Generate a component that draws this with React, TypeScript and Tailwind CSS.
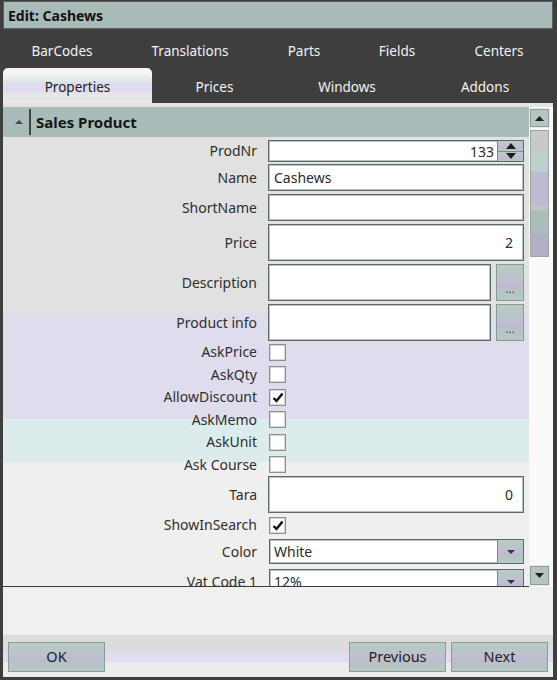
import React from "react";

const btnBg =
  "bg-[linear-gradient(to_bottom,#bccac8_0%,#b7c7c5_25%,#c2bfd2_45%,#bdbacf_62%,#b5c5c3_75%,#b9c7c5_100%)]";

function TriUp({ c = "#1e1e1e", w = 9, h = 5 }: { c?: string; w?: number; h?: number }) {
  return (
    <svg width={w} height={h} viewBox={`0 0 ${w} ${h}`}>
      <polygon points={`0,${h} ${w / 2},0 ${w},${h}`} fill={c} />
    </svg>
  );
}
function TriDown({ c = "#1e1e1e", w = 9, h = 5 }: { c?: string; w?: number; h?: number }) {
  return (
    <svg width={w} height={h} viewBox={`0 0 ${w} ${h}`}>
      <polygon points={`0,0 ${w},0 ${w / 2},${h}`} fill={c} />
    </svg>
  );
}

function Label({ text }: { text: string }) {
  return (
    <div className="w-[254px] shrink-0 text-right text-[14px] text-[#2e2e2e] leading-none whitespace-nowrap">
      {text}
    </div>
  );
}

function Check({ checked }: { checked?: boolean }) {
  return (
    <div className="w-[17px] h-[17px] bg-white border border-[#8f8f8f] shadow-[inset_0_0_0_1px_#d8d8d8] flex items-center justify-center">
      {checked && (
        <svg width="12" height="11" viewBox="0 0 12 11">
          <path d="M1.5 6 L4.5 9 L10.5 1.5" stroke="#111" strokeWidth="2.4" fill="none" />
        </svg>
      )}
    </div>
  );
}

function Box({ children, cls }: { children?: React.ReactNode; cls: string }) {
  return (
    <div
      className={
        "bg-white border border-[#5e6a69] shadow-[inset_0_0_0_1px_#b9c2c1] flex items-center text-[14px] text-[#2b2b2b] " +
        cls
      }
    >
      {children}
    </div>
  );
}

function DotsBtn() {
  return (
    <div
      className={
        "w-[28px] h-full border border-[#8d9997] flex items-end justify-center pb-[6px] text-[11px] leading-none text-[#333] " +
        btnBg
      }
    >
      ...
    </div>
  );
}

function Combo({ text }: { text: string }) {
  return (
    <Box cls="w-[255px] h-full pl-[4px] pr-0 justify-between">
      <span>{text}</span>
      <div className={"w-[26px] h-full border-l border-[#7d8988] flex items-center justify-center " + btnBg}>
        <TriDown c="#333" w={8} h={4} />
      </div>
    </Box>
  );
}

export default function App() {
  return (
    <div className="w-[557px] h-[680px] bg-[#3e3e3e] pt-[1px] pl-[3px] pr-[4px] pb-[3px] flex flex-col font-['Noto_Sans',sans-serif] overflow-hidden">
      {/* Title */}
      <div className="h-[28px] bg-[#a9bbb8] border border-[#5a5f5e] flex items-center pl-[4px] text-[14px] font-bold text-[#111] shrink-0">
        Edit: Cashews
      </div>
      <div className="h-[3px] shrink-0" />
      {/* Tabs row 1 */}
      <div className="h-[36px] pt-[2px] flex shrink-0 text-[13.5px] text-[#f2f2f2]">
        <div className="w-[118px] flex items-center justify-center">BarCodes</div>
        <div className="w-[138px] flex items-center justify-center">Translations</div>
        <div className="w-[90px] flex items-center justify-center">Parts</div>
        <div className="w-[96px] flex items-center justify-center">Fields</div>
        <div className="w-[108px] flex items-center justify-center">Centers</div>
      </div>
      {/* Tabs row 2 */}
      <div className="h-[35px] flex shrink-0 text-[13.5px] text-[#f2f2f2]">
        <div className="w-[149px] pt-[3px] flex items-center justify-center rounded-t-[5px] text-[#222] bg-[linear-gradient(to_bottom,#f6f6f6_0%,#f3f3f3_22%,#e2eded_26%,#e0ebeb_36%,#dedcee_42%,#dedcee_68%,#e6e6e6_74%,#e8e8e8_100%)]">
          Properties
        </div>
        <div className="w-[125px] pt-[3px] flex items-center justify-center">Prices</div>
        <div className="w-[140px] pt-[3px] flex items-center justify-center">Windows</div>
        <div className="w-[136px] pt-[3px] flex items-center justify-center">Addons</div>
      </div>
      {/* Content */}
      <div className="flex-1 bg-[#f0f0f0] flex flex-col">
        <div className="h-[4px] bg-[#e4e4e4] shrink-0" />
        <div className="h-[480px] flex shrink-0">
          {/* left column */}
          <div className="w-[526px] flex flex-col border-b border-[#3a3a3a] overflow-hidden">
            <div className="h-[30px] bg-[#a9bcba] flex items-center shrink-0">
              <div className="w-[26px] h-full flex items-center justify-center pl-[6px]">
                <TriUp c="#4a4a4a" w={8} h={4} />
              </div>
              <div className="w-[2px] h-[26px] bg-[#3c4442]" />
              <div className="pl-[5px] text-[15px] font-bold text-[#161616]">Sales Product</div>
            </div>
            <div className="flex-1 overflow-hidden pt-[3px] bg-[linear-gradient(to_bottom,#e1e1e1_0px,#e1e1e1_176px,#dfdcee_176px,#dfdcee_282px,#dcecec_282px,#dcecec_325px,#efefef_325px)]">
              {/* ProdNr */}
              <div className="h-[22px] flex items-center">
                <Label text="ProdNr" />
                <div className="ml-[11px] h-full">
                  <Box cls="w-[256px] h-full justify-end">
                    <span className="pr-[3px]">133</span>
                    <div className="w-[26px] h-full flex flex-col border-l border-[#7d8988]">
                      <div className={"flex-1 flex items-center justify-center border-b border-[#7d8988] " + btnBg}>
                        <TriUp w={10} h={6} />
                      </div>
                      <div className={"flex-1 flex items-center justify-center " + btnBg}>
                        <TriDown w={10} h={6} />
                      </div>
                    </div>
                  </Box>
                </div>
              </div>
              {/* Name */}
              <div className="h-[27px] mt-[2px] flex items-center">
                <Label text="Name" />
                <div className="ml-[11px] h-full">
                  <Box cls="w-[256px] h-full pl-[5px]">Cashews</Box>
                </div>
              </div>
              {/* ShortName */}
              <div className="h-[27px] mt-[3px] flex items-center">
                <Label text="ShortName" />
                <div className="ml-[11px] h-full">
                  <Box cls="w-[256px] h-full" />
                </div>
              </div>
              {/* Price */}
              <div className="h-[37px] mt-[3px] flex items-center">
                <Label text="Price" />
                <div className="ml-[11px] h-full">
                  <Box cls="w-[256px] h-full justify-end pr-[10px]">2</Box>
                </div>
              </div>
              {/* Description */}
              <div className="h-[37px] mt-[3px] flex items-center">
                <Label text="Description" />
                <div className="ml-[11px] h-full flex gap-[5px]">
                  <Box cls="w-[223px] h-full" />
                  <DotsBtn />
                </div>
              </div>
              {/* Product info */}
              <div className="h-[37px] mt-[3px] flex items-center">
                <Label text="Product info" />
                <div className="ml-[11px] h-full flex gap-[5px]">
                  <Box cls="w-[223px] h-full" />
                  <DotsBtn />
                </div>
              </div>
              {[
                ["AskPrice", false],
                ["AskQty", false],
                ["AllowDiscount", true],
                ["AskMemo", false],
                ["AskUnit", false],
                ["Ask Course", false],
              ].map(([l, c]) => (
                <div key={l as string} className="h-[22.5px] flex items-center">
                  <Label text={l as string} />
                  <div className="ml-[12px]">
                    <Check checked={c as boolean} />
                  </div>
                </div>
              ))}
              {/* Tara */}
              <div className="h-[37px] flex items-center">
                <Label text="Tara" />
                <div className="ml-[11px] h-full">
                  <Box cls="w-[256px] h-full justify-end pr-[10px]">0</Box>
                </div>
              </div>
              <div className="h-[24px] flex items-center">
                <Label text="ShowInSearch" />
                <div className="ml-[12px]">
                  <Check checked />
                </div>
              </div>
              <div className="h-[25px] mt-[2px] flex items-center">
                <Label text="Color" />
                <div className="ml-[12px] h-full">
                  <Combo text="White" />
                </div>
              </div>
              <div className="h-[25px] mt-[5px] flex items-center">
                <Label text="Vat Code 1" />
                <div className="ml-[12px] h-full">
                  <Combo text="12%" />
                </div>
              </div>
            </div>
          </div>
          {/* scrollbar */}
          <div className="w-[21px] flex flex-col bg-[#fafafa] pt-[1px]">
            <div className="h-[20px] border border-[#e9e9e9] bg-[#b6c5c3] shadow-[inset_0_0_0_1px_#8e9c9a] flex items-center justify-center">
              <TriUp c="#1f1f1f" w={9} h={5} />
            </div>
            <div className="h-[2px]" />
            <div className="h-[127px] mx-[1px] border border-[#9aa5a4] bg-[linear-gradient(to_bottom,#cacaca_0%,#c8c8c8_17%,#bdd0cd_18%,#bdd0cd_32%,#bcbbd0_33%,#bcbbd0_58%,#c3c3c3_60%,#c3c3c3_63%,#aabdbb_64%,#aabdbb_82%,#b1afc5_83%,#b1afc5_100%)]" />
            <div className="flex-1" />
            <div className="h-[21px] mb-[1px] border border-[#e9e9e9] bg-[#b6c5c3] shadow-[inset_0_0_0_1px_#8e9c9a] flex items-center justify-center">
              <TriDown c="#1f1f1f" w={9} h={5} />
            </div>
          </div>
          <div className="w-[3px] bg-[#fafafa]" />
        </div>
        <div className="flex-1" />
      </div>
      {/* Button bar */}
      <div className="h-[42px] shrink-0 flex items-start pt-[7px] pl-[5px] pr-[5px] bg-[linear-gradient(to_bottom,#dcdcdc_0%,#dcdcdc_40%,#e0deee_42%,#e0deee_64%,#ececec_66%,#ececec_100%)]">
        <div className={"w-[97px] h-[30px] border border-[#8c9a98] flex items-center justify-center text-[14.5px] text-[#222] " + btnBg}>
          OK
        </div>
        <div className="flex-1" />
        <div className={"w-[97px] h-[30px] border border-[#8c9a98] flex items-center justify-center text-[14.5px] text-[#222] " + btnBg}>
          Previous
        </div>
        <div className={"w-[97px] h-[30px] ml-[5px] border border-[#8c9a98] flex items-center justify-center text-[14.5px] text-[#222] " + btnBg}>
          Next
        </div>
      </div>
    </div>
  );
}
